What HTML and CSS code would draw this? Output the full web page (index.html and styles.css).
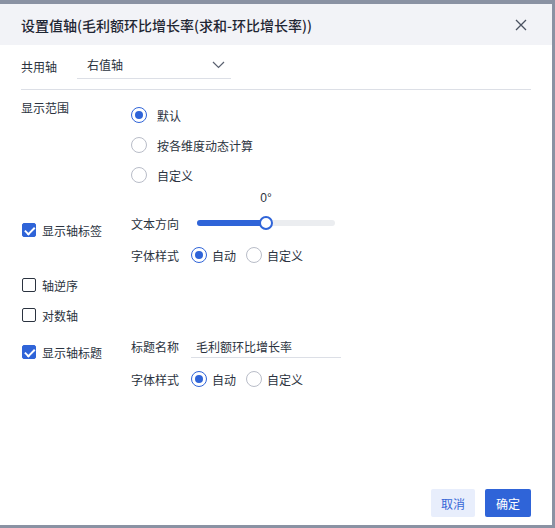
FILE: index.html
```html
<!DOCTYPE html>
<html lang="zh-CN">
<head>
<meta charset="utf-8">
<link rel="stylesheet" href="styles.css">
</head>
<body>
<div class="dialog">
  <div class="header">
    <span class="title">设置值轴(毛利额环比增长率(求和-环比增长率))</span>
    <svg class="close" width="12" height="12" viewBox="0 0 12 12"><path d="M1 1L11 11M11 1L1 11" stroke="#4a5160" stroke-width="1.3" fill="none"/></svg>
  </div>
  <div class="content">
    <div class="row-share">
      <span class="lbl-share">共用轴</span>
      <div class="select">
        <span>右值轴</span>
        <svg class="chev" width="13" height="8" viewBox="0 0 13 8"><path d="M1 1L6.5 6.5L12 1" stroke="#5a6170" stroke-width="1.2" fill="none"/></svg>
      </div>
    </div>
    <div class="divider"></div>

    <div class="section range">
      <div class="left"><span class="lbl">显示范围</span></div>
      <div class="right">
        <div class="radio-row"><span class="radio on"></span><span>默认</span></div>
        <div class="radio-row"><span class="radio"></span><span>按各维度动态计算</span></div>
        <div class="radio-row"><span class="radio"></span><span>自定义</span></div>
      </div>
    </div>

    <div class="section labels">
      <div class="left center"><div class="check-item"><span class="checkbox on"></span><span>显示轴标签</span></div></div>
      <div class="right">
        <div class="deg-row"><div class="deg">0°</div></div>
        <div class="slider-row">
          <span class="sub-lbl">文本方向</span>
          <div class="track"><div class="fill"></div><div class="thumb"></div></div>
        </div>
        <div class="font-row">
          <span class="sub-lbl">字体样式</span>
          <span class="radio on sm"></span><span class="opt">自动</span>
          <span class="radio sm"></span><span class="opt">自定义</span>
        </div>
      </div>
    </div>

    <div class="single"><div class="check-item"><span class="checkbox"></span><span>轴逆序</span></div></div>
    <div class="single"><div class="check-item"><span class="checkbox"></span><span>对数轴</span></div></div>

    <div class="section titles">
      <div class="left top"><div class="check-item"><span class="checkbox on"></span><span>显示轴标题</span></div></div>
      <div class="right">
        <div class="name-row">
          <span class="sub-lbl">标题名称</span>
          <div class="input">毛利额环比增长率</div>
        </div>
        <div class="font-row f2">
          <span class="sub-lbl">字体样式</span>
          <span class="radio on sm"></span><span class="opt">自动</span>
          <span class="radio sm"></span><span class="opt">自定义</span>
        </div>
      </div>
    </div>
  </div>
  <div class="footer">
    <button class="btn cancel">取消</button>
    <button class="btn ok">确定</button>
  </div>
</div>
</body>
</html>
```
FILE: styles.css
```css
* { box-sizing: border-box; }
html, body { margin: 0; padding: 0; }
body {
  background: #8a92a3;
  width: 555px;
  height: 528px;
  overflow: hidden;
  font-family: "Noto Sans CJK SC", "Noto Sans", sans-serif;
  font-size: 12px;
  color: #2b3340;
}
.dialog {
  margin-top: 4px;
  width: 552px;
  height: 521px;
  background: #fff;
  display: flex;
  flex-direction: column;
}
.header {
  height: 41px;
  background: #f2f3f7;
  display: flex;
  align-items: center;
  padding: 0 25px 0 21px;
  justify-content: space-between;
}
.title {
  font-size: 14px;
  font-weight: 500;
  color: #1f2633;
}
.close { display: block; }
.content {
  padding: 7px 21px 0 21px;
}
.row-share {
  display: flex;
  align-items: flex-start;
  height: 30px;
}
.lbl-share {
  width: 56px;
  line-height: 30px;
}
.select {
  width: 154px;
  height: 27px;
  border-bottom: 1px solid #dcdfe6;
  display: flex;
  justify-content: space-between;
  align-items: center;
  padding: 0 6px 0 10px;
  line-height: 26px;
}
.chev { display: block; }
.divider {
  margin-top: 7px;
  height: 1px;
  background: #dcdfe6;
}
.section {
  display: flex;
}
.range { margin-top: 10px; }
.left {
  width: 110px;
  flex: none;
}
.left.center { display: flex; align-items: center; }
.left.top { padding-top: 5px; }
.lbl { line-height: 16px; display: block; }
.right { flex: 1; }
.radio-row {
  height: 30px;
  display: flex;
  align-items: center;
}
.radio {
  width: 16px;
  height: 16px;
  border-radius: 50%;
  border: 1px solid #b9bdc8;
  background: #fff;
  flex: none;
  position: relative;
  margin-right: 10px;
}
.radio.on {
  border: 1.5px solid #2f64d8;
}
.radio.on::after {
  content: "";
  position: absolute;
  left: 50%;
  top: 50%;
  width: 8px;
  height: 8px;
  margin: -4px 0 0 -4px;
  border-radius: 50%;
  background: #2f64d8;
}
.radio.sm { margin-right: 5px; }
.deg-row { height: 16px; padding-left: 66px; }
.deg {
  width: 138px;
  text-align: center;
  line-height: 16px;
  font-family: "Liberation Sans", sans-serif;
}
.slider-row {
  height: 34px;
  display: flex;
  align-items: center;
}
.sub-lbl { width: 60px; flex: none; }
.slider-row .sub-lbl { width: 66px; }
.track {
  width: 138px;
  height: 6px;
  border-radius: 3px;
  background: #ebedf0;
  position: relative;
}
.fill {
  width: 69px;
  height: 6px;
  border-radius: 3px;
  background: #2f64d8;
}
.thumb {
  position: absolute;
  left: 62px;
  top: -4px;
  width: 14px;
  height: 14px;
  border-radius: 50%;
  background: #fff;
  border: 2px solid #2f64d8;
}
.font-row {
  height: 30px;
  display: flex;
  align-items: center;
}
.opt { margin-right: 10px; }
.check-item {
  display: flex;
  align-items: center;
  height: 30px;
  padding-left: 1px;
}
.checkbox {
  width: 14px;
  height: 14px;
  border: 1.5px solid #2b3340;
  border-radius: 2px;
  margin-right: 6px;
  flex: none;
  position: relative;
}
.checkbox.on {
  background: #2f64d8;
  border-color: #2f64d8;
}
.checkbox.on::after {
  content: "";
  position: absolute;
  left: 3.5px;
  top: 0.5px;
  width: 4px;
  height: 7.5px;
  border-right: 2px solid #fff;
  border-bottom: 2px solid #fff;
  transform: rotate(45deg);
}
.single { height: 30px; }
.titles { margin-top: 2px; }
.name-row {
  height: 30px;
  display: flex;
  align-items: flex-start;
}
.name-row .sub-lbl { line-height: 30px; }
.input {
  width: 150px;
  height: 26px;
  border-bottom: 1px solid #dcdfe6;
  padding: 4px 0 0 5px;
  line-height: 21px;
}
.f2 { margin-top: 2px; }
.footer {
  margin-top: auto;
  display: flex;
  justify-content: flex-end;
  gap: 10px;
  padding: 0 21px 8px 0;
}
.btn {
  height: 28px;
  border: none;
  border-radius: 2px;
  font-family: "Noto Sans CJK SC", sans-serif;
  font-size: 12px;
  padding: 0;
}
.cancel { width: 44px; background: #e8eefc; color: #3566d6; }
.ok { width: 46px; background: #2f64d8; color: #fff; }
```
